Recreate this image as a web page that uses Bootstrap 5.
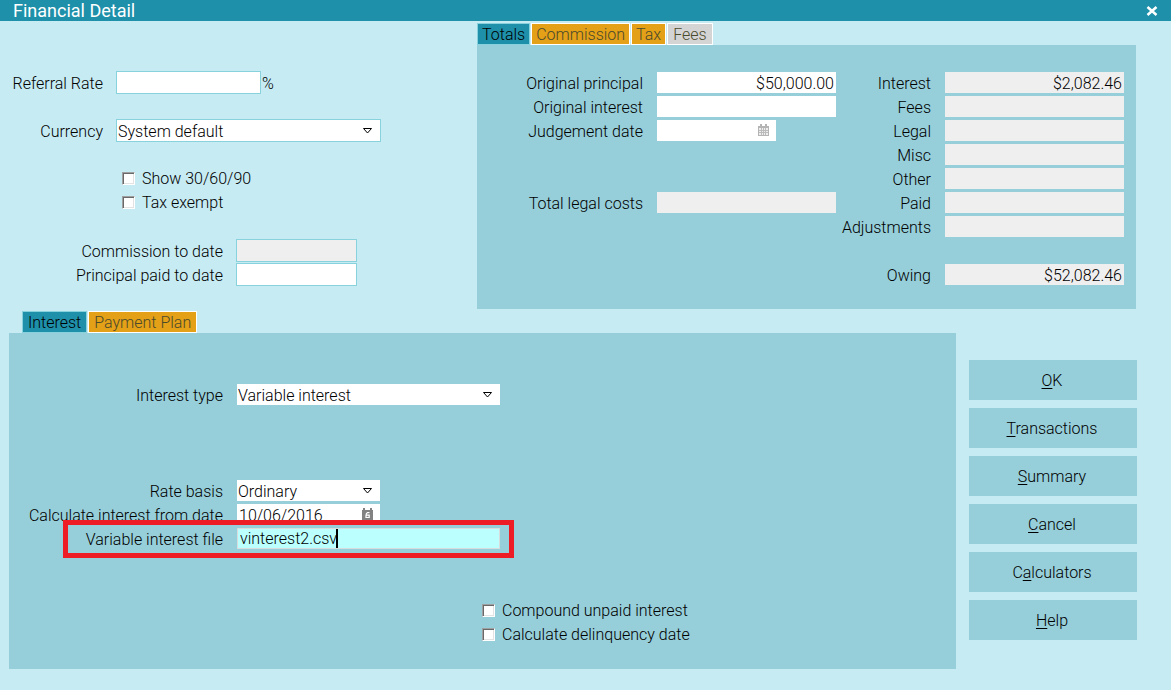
<!DOCTYPE html>
<html lang="en">
<head>
<meta charset="utf-8">
<meta name="viewport" content="width=device-width, initial-scale=1">
<title>Financial Detail</title>
<link rel="stylesheet" href="https://cdn.jsdelivr.net/npm/bootstrap@5.3.0/dist/css/bootstrap.min.css">
<style>
  :root { --teal: #1e90aa; --sky: #c6ebf3; --panel: #96ced9; --edge: #87d2dc; --amber: #e4a017; }
  body { background: var(--sky); color: #000; font: 300 16px/21px Roboto, "Liberation Sans", sans-serif; }
  .titlebar { background: var(--teal); color: #fff; height: 21px; padding: 0 13px; font-size: 18px; font-weight: 400; }
  .titlebar button { background: none; border: 0; padding: 0; line-height: 0; }
  .upper { padding: 2px 35px 2px 0; }
  .general { width: 477px; padding-top: 48px; }
  .lower { padding: 0 34px 20px 9px; gap: 13px; }
  .pane { background: var(--panel); }
  .pane-totals { padding: 27px 12px 24px 0; }
  .pane-interest { padding: 51px 0 24px; }

  /* rows of label + control */
  .stack { display: flex; flex-direction: column; gap: 3px; }
  .entry { display: flex; gap: 14px; height: 21px; line-height: 23px; position: relative; }
  .general .stack { gap: 1px; }
  .general .entry { height: 23px; gap: 13px; line-height: 25px; }
  .entry > label:first-child { flex: none; text-align: right; white-space: nowrap; }
  .lbl-a { width: 103px; }
  .lbl-b { width: 223px; }
  .lbl-c { width: 166px; }
  .lbl-d { width: 95px; }
  .pane-interest .lbl-b { width: 214px; }
  .col-left { flex: 1 1 180px; min-width: 0; }
  .col-right { flex: 1 1 109px; min-width: 0; }
  .ctl { position: relative; flex: none; }
  .ctl-grow { flex: 1 1 0; min-width: 0; }
  .w-s { width: 119px; } .w-m { width: 145px; } .w-l { width: 265px; } .w-n { width: 121px; } .w-r { width: 143px; }
  .pane-interest .w-l { width: 263px; }
  .ctl input, .ctl select { display: block; width: 100%; height: 100%; border: 0; border-radius: 0; padding: 2px 2px 0; background: #fff; color: #000; appearance: none; font: inherit; line-height: 19px; outline: 0; }
  .ctl input:read-only { background: #efefef; }
  .ctl select { padding-left: 1px; }
  .general .ctl input, .general .ctl select { border: 1px solid var(--edge); padding: 1px 1px 0; }
  .ctl svg { position: absolute; right: 7px; top: 50%; margin-top: -7px; pointer-events: none; }
  .ctl .arrow { right: 8px; margin-top: -3px; }
  .general .ctl .arrow { right: 9px; }
  .ctl .file-box { background: #bff; border: 1px solid #d8dcdc; padding: 0 2px; }
  .caret { position: absolute; left: 99px; top: 1px; width: 2px; height: 19px; background: #000; }
  .highlight { position: absolute; left: 54px; top: -8px; width: 451px; height: 38px; border: 5px solid #ee1c24; pointer-events: none; }
  .pct { margin-left: -12px; }

  .entry.tick { gap: 7px; align-items: center; line-height: 21px; }
  .tick input { appearance: none; margin: 0; width: 13px; height: 13px; background: #fff; border: 1px solid; border-color: #a0a0a0 #fff #fff #a0a0a0; box-shadow: inset 1px 1px #696969, inset -1px -1px #e3e3e3; }
  .tick-a { padding-left: 122px; }
  .tick-b { padding-left: 473px; }

  .tabs { display: flex; gap: 1px; height: 22px; }
  .tabs button { border: 1px solid #fff; background: var(--amber); color: #4a4a2c; padding: 1px 4px 0; line-height: 20px; font-weight: 300; }
  .tabs button.on { background: var(--teal); border-color: var(--edge); color: #000; }
  .tabs button:disabled { background: #d4d4d4; padding: 1px 5px 0; }
  .tabs-interest { margin-left: 13px; }
  .tabs-interest button { padding: 1px 5px 0; }
  .actions { width: 168px; padding-top: 49px; gap: 8px; }
  .actions .btn { height: 40px; padding: 0 2px 0 0; border: 0; border-radius: 0; background: var(--panel); color: #000; font: inherit; }
  .actions u { text-underline-offset: 2px; text-decoration-skip-ink: none; }
</style>
</head>
<body>
<header class="titlebar d-flex justify-content-between align-items-center">
  <span>Financial Detail</span>
  <button type="button" aria-label="Close"><svg width="12" height="10" viewBox="0 0 12 10" stroke="#fff" stroke-width="2.500"><path d="M1.500 1l9 8M10.500 1l-9 8"/></svg></button>
</header>

<main>
<section class="upper d-flex">
  <form class="general flex-shrink-0">
    <div class="stack">
      <div class="entry"><label class="lbl-a" for="rate">Referral Rate</label><div class="ctl w-m"><input id="rate" type="text"></div><span class="pct">%</span></div>
      <div class="entry"></div>
      <div class="entry"><label class="lbl-a" for="cur">Currency</label><div class="ctl w-l"><select id="cur"><option>System default</option></select><svg class="arrow" width="9" height="6" viewBox="0 0 9 6" fill="none" stroke="#000"><path d="M.5.5h8L4.500 5z"/></svg></div></div>
      <div class="entry"></div>
      <div class="entry tick tick-a"><input id="s30" type="checkbox"><label for="s30">Show 30/60/90</label></div>
      <div class="entry tick tick-a"><input id="tex" type="checkbox"><label for="tex">Tax exempt</label></div>
      <div class="entry"></div>
      <div class="entry"><label class="lbl-b" for="ctd">Commission to date</label><div class="ctl w-n"><input id="ctd" type="text" readonly></div></div>
      <div class="entry"><label class="lbl-b" for="ptd">Principal paid to date</label><div class="ctl w-n"><input id="ptd" type="text"></div></div>
    </div>
  </form>

  <div class="flex-grow-1">
    <div class="tabs" role="tablist">
      <button type="button" role="tab" class="on">Totals</button>
      <button type="button" role="tab">Commission</button>
      <button type="button" role="tab">Tax</button>
      <button type="button" role="tab" disabled>Fees</button>
    </div>
    <form class="pane pane-totals d-flex">
      <div class="stack col-left">
        <div class="entry"><label class="lbl-c" for="op">Original principal</label><div class="ctl ctl-grow"><input id="op" class="text-end" type="text" value="$50,000.00"></div></div>
        <div class="entry"><label class="lbl-c" for="oi">Original interest</label><div class="ctl ctl-grow"><input id="oi" type="text"></div></div>
        <div class="entry"><label class="lbl-c" for="jd">Judgement date</label><div class="ctl w-s"><input id="jd" type="text"><svg width="11" height="12" viewBox="0 0 11 12"><path fill="#b4b4b4" d="M0 2h11v10H0zM2 0h2v3H2zM7 0h2v3H7z"/><path fill="#eee" d="M1 4h9v7H1z"/><path stroke="#bbb" d="M1 6.500h9M1 8.500h9M3.500 4v7M5.500 4v7M7.500 4v7"/></svg></div></div>
        <div class="entry"></div>
        <div class="entry"></div>
        <div class="entry"><label class="lbl-c" for="tl">Total legal costs</label><div class="ctl ctl-grow"><input id="tl" type="text" readonly></div></div>
      </div>
      <div class="stack col-right">
        <div class="entry"><label class="lbl-d" for="f1">Interest</label><div class="ctl ctl-grow"><input id="f1" class="text-end" type="text" readonly value="$2,082.46"></div></div>
        <div class="entry"><label class="lbl-d" for="f2">Fees</label><div class="ctl ctl-grow"><input id="f2" type="text" readonly></div></div>
        <div class="entry"><label class="lbl-d" for="f3">Legal</label><div class="ctl ctl-grow"><input id="f3" type="text" readonly></div></div>
        <div class="entry"><label class="lbl-d" for="f4">Misc</label><div class="ctl ctl-grow"><input id="f4" type="text" readonly></div></div>
        <div class="entry"><label class="lbl-d" for="f5">Other</label><div class="ctl ctl-grow"><input id="f5" type="text" readonly></div></div>
        <div class="entry"><label class="lbl-d" for="f6">Paid</label><div class="ctl ctl-grow"><input id="f6" type="text" readonly></div></div>
        <div class="entry"><label class="lbl-d" for="f7">Adjustments</label><div class="ctl ctl-grow"><input id="f7" type="text" readonly></div></div>
        <div class="entry"></div>
        <div class="entry"><label class="lbl-d" for="f8">Owing</label><div class="ctl ctl-grow"><input id="f8" class="text-end" type="text" readonly value="$52,082.46"></div></div>
      </div>
    </form>
  </div>
</section>

<section class="lower d-flex">
  <div class="flex-grow-1">
    <div class="tabs tabs-interest" role="tablist">
      <button type="button" role="tab" class="on">Interest</button>
      <button type="button" role="tab">Payment Plan</button>
    </div>
    <form class="pane pane-interest stack">
      <div class="entry"><label class="lbl-b" for="it">Interest type</label><div class="ctl w-l"><select id="it"><option>Variable interest</option></select><svg class="arrow" width="9" height="6" viewBox="0 0 9 6" fill="none" stroke="#000"><path d="M.5.5h8L4.500 5z"/></svg></div></div>
      <div class="entry"></div>
      <div class="entry"></div>
      <div class="entry"></div>
      <div class="entry"><label class="lbl-b" for="rb">Rate basis</label><div class="ctl w-r"><select id="rb"><option>Ordinary</option></select><svg class="arrow" width="9" height="6" viewBox="0 0 9 6" fill="none" stroke="#000"><path d="M.5.5h8L4.500 5z"/></svg></div></div>
      <div class="entry"><label class="lbl-b" for="cd">Calculate interest from date</label><div class="ctl w-r"><input id="cd" type="text" value="10/06/2016"><svg width="11" height="13" viewBox="0 0 11 13"><path fill="#828282" d="M0 2h11v11H0zM1 0h2v3H1zM8 0h2v3H8z"/><path fill="none" stroke="#fff" stroke-width="1.200" d="M7.500 4.600H5.500Q4 5 4 7.500v2h3.200V7.200H4"/></svg></div></div>
      <div class="entry"><label class="lbl-b" for="vf">Variable interest file</label><div class="ctl w-l"><input id="vf" class="file-box" type="text" value="vinterest2.csv"><span class="caret"></span></div><div class="highlight"></div></div>
      <div class="entry"></div>
      <div class="entry"></div>
      <div class="entry tick tick-b"><input id="cu" type="checkbox"><label for="cu">Compound unpaid interest</label></div>
      <div class="entry tick tick-b"><input id="dd" type="checkbox"><label for="dd">Calculate delinquency date</label></div>
    </form>
  </div>
  <div class="actions d-flex flex-column flex-shrink-0">
    <button type="button" class="btn"><u>O</u>K</button>
    <button type="button" class="btn"><u>T</u>ransactions</button>
    <button type="button" class="btn"><u>S</u>ummary</button>
    <button type="button" class="btn"><u>C</u>ancel</button>
    <button type="button" class="btn">C<u>a</u>lculators</button>
    <button type="button" class="btn"><u>H</u>elp</button>
  </div>
</section>
</main>
<script src="https://cdn.jsdelivr.net/npm/bootstrap@5.3.0/dist/js/bootstrap.bundle.min.js"></script>
</body>
</html>
